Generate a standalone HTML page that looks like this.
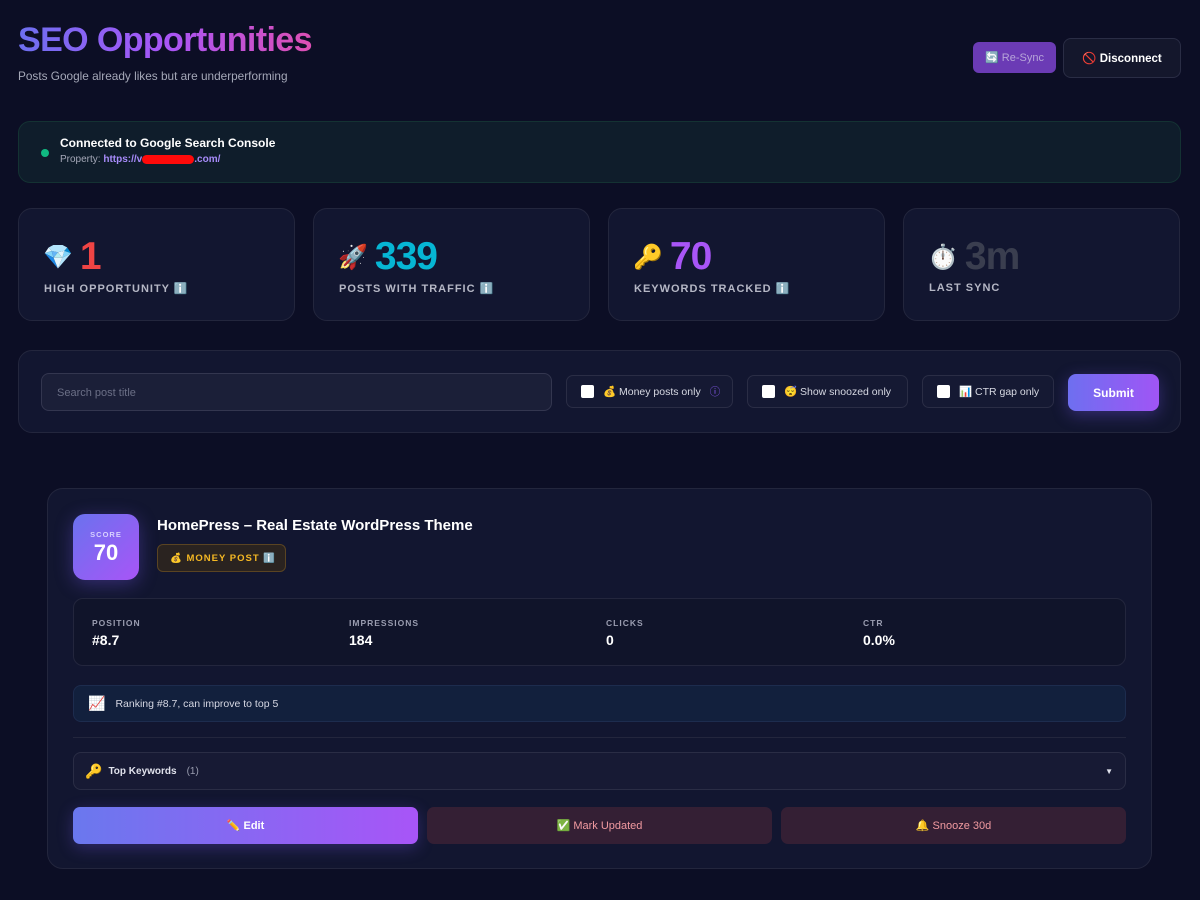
<!DOCTYPE html>
<html><head><meta charset="utf-8"><style>
*{box-sizing:border-box;margin:0;padding:0}
body{width:1200px;height:900px;overflow:hidden;background:#0c0e25;font-family:"Liberation Sans","Noto Sans CJK JP",sans-serif;color:#fff;position:relative}
.abs{position:absolute}
h1{position:absolute;left:18px;top:21px;font-size:34px;font-weight:700;letter-spacing:-0.6px;background:linear-gradient(90deg,#6d6ff0,#a855f7 50%,#dc4fb3);-webkit-background-clip:text;color:transparent}
.sub{left:18px;top:69px;font-size:11.8px;color:#a5a8b8}
.btn1{left:973px;top:42px;width:83px;height:31px;border-radius:6px;background:#6b3bb5;color:#b7a5d9;font-size:11px;display:flex;align-items:center;justify-content:center}
.btn2{left:1063px;top:38px;width:118px;height:40px;border-radius:8px;background:#14172c;border:1px solid #2a2d45;font-size:11.5px;font-weight:700;display:flex;align-items:center;justify-content:center}
.conn{left:18px;top:121px;width:1163px;height:62px;border-radius:12px;background:#0f1d2b;border:1px solid #143233}
.dot{left:22px;top:27px;width:8px;height:8px;border-radius:50%;background:#10b981}
.card{border-radius:14px;background:#121630;border:1px solid #23263d;width:277px;height:113px;top:208px}
.card .n{position:absolute;left:24px;top:26px;font-size:39px;font-weight:700;letter-spacing:-1px;display:flex;align-items:center;gap:8px}
.card .n span.e{font-size:24px}
.card .l{position:absolute;left:25px;top:73px;font-size:11px;letter-spacing:1px;color:#b5b7c5;font-weight:700}
.filt{left:18px;top:350px;width:1163px;height:83px;border-radius:14px;background:#121630;border:1px solid #23263d}
.search{left:22px;top:22px;width:511px;height:38px;border-radius:8px;background:#1b1f38;border:1px solid #33364f;font-size:11px;color:#6b6f86;padding:13px 15px}
.chk{top:24px;height:33px;border-radius:7px;background:#151933;border:1px solid #2a2d45;font-size:10.5px;color:#d6d8e2;display:flex;align-items:center;padding-left:14px;gap:9px}
.chk i{display:inline-block;width:13px;height:13px;background:#fff;border-radius:2px}
.submit{left:1049px;top:23px;width:91px;height:37px;border-radius:8px;background:linear-gradient(90deg,#6e6ff0,#a055f5);font-size:12px;font-weight:700;display:flex;align-items:center;justify-content:center;box-shadow:0 4px 16px rgba(120,90,240,.35)}
.post{left:47px;top:488px;width:1105px;height:381px;border-radius:16px;background:#121630;border:1px solid #23263d}
.score{left:25px;top:25px;width:66px;height:66px;border-radius:12px;background:linear-gradient(135deg,#6a72ee,#a855f7);text-align:center;box-shadow:0 4px 18px rgba(120,90,240,.35)}
.score .s{font-size:7.5px;letter-spacing:1px;color:#d8d0ff;margin-top:16px;font-weight:700}
.score .v{font-size:22px;font-weight:700;margin-top:1px}
.title{left:109px;top:28px;font-size:15px;font-weight:700}
.money{left:109px;top:55px;width:129px;height:28px;border-radius:6px;background:#2a2320;border:1px solid #5a4422;color:#f5b823;font-size:9.5px;font-weight:700;letter-spacing:1px;display:flex;align-items:center;padding-left:12px;gap:5px}
.stats{left:25px;top:109px;width:1053px;height:68px;border-radius:10px;background:#10142a;border:1px solid #23263d}
.st{position:absolute;top:19px}
.st .k{font-size:8.5px;letter-spacing:1px;color:#9a9db0;font-weight:700}
.st .v{font-size:14px;font-weight:700;margin-top:4px}
.rank{left:25px;top:196px;width:1053px;height:37px;border-radius:8px;background:#12203d;border:1px solid #1d2c4e;font-size:10.5px;color:#d5d7e3;display:flex;align-items:center;padding-left:14px;gap:10px}
.hr{left:25px;top:248px;width:1053px;height:1px;background:#23263d}
.kw{left:25px;top:263px;width:1053px;height:38px;border-radius:8px;background:#171a34;border:1px solid #2a2d45;font-size:10px;color:#e0e2ec;font-weight:700;display:flex;align-items:center;padding-left:11px;gap:6px}
.ab{top:318px;height:37px;width:345px;border-radius:7px;font-size:11px;display:flex;align-items:center;justify-content:center}
</style></head><body>
<h1>SEO Opportunities</h1>
<div class="abs sub">Posts Google already likes but are underperforming</div>
<div class="abs btn1">🔄 Re-Sync</div>
<div class="abs btn2">🚫 Disconnect</div>
<div class="abs conn"><div class="abs dot"></div>
<div class="abs" style="left:41px;top:14px;font-size:12px;font-weight:700">Connected to Google Search Console</div>
<div class="abs" style="left:41px;top:32px;font-size:10px;color:#a5a8b8">Property: <span style="color:#a78bfa;font-weight:700">https://v<span style="display:inline-block;width:52px;height:9px;background:#ff0a0a;border-radius:5px;vertical-align:middle"></span>.com/</span></div></div>
<div class="abs card" style="left:18px"><div class="n"><span class="e">💎</span><span style="color:#ef4444">1</span></div><div class="l">HIGH OPPORTUNITY ℹ️</div></div>
<div class="abs card" style="left:313px"><div class="n"><span class="e">🚀</span><span style="color:#06b6d4">339</span></div><div class="l">POSTS WITH TRAFFIC ℹ️</div></div>
<div class="abs card" style="left:608px"><div class="n"><span class="e">🔑</span><span style="color:#a855f7">70</span></div><div class="l">KEYWORDS TRACKED ℹ️</div></div>
<div class="abs card" style="left:903px"><div class="n"><span class="e">⏱️</span><span style="color:#3a3e4f">3m</span></div><div class="l">LAST SYNC</div></div>
<div class="abs filt">
<div class="abs search">Search post title</div>
<div class="abs chk" style="left:547px;width:167px"><i></i>💰 Money posts only <span style="color:#8b5cf6">ⓘ</span></div>
<div class="abs chk" style="left:728px;width:161px"><i></i>😴 Show snoozed only</div>
<div class="abs chk" style="left:903px;width:132px"><i></i>📊 CTR gap only</div>
<div class="abs submit">Submit</div>
</div>
<div class="abs post">
<div class="abs score"><div class="s">SCORE</div><div class="v">70</div></div>
<div class="abs title">HomePress – Real Estate WordPress Theme</div>
<div class="abs money">💰 MONEY POST ℹ️</div>
<div class="abs stats">
<div class="st" style="left:18px"><div class="k">POSITION</div><div class="v">#8.7</div></div>
<div class="st" style="left:275px"><div class="k">IMPRESSIONS</div><div class="v">184</div></div>
<div class="st" style="left:532px"><div class="k">CLICKS</div><div class="v">0</div></div>
<div class="st" style="left:789px"><div class="k">CTR</div><div class="v">0.0%</div></div>
</div>
<div class="abs rank"><span style="font-size:14px">📈</span> <span>Ranking #8.7, can improve to top 5</span></div>
<div class="abs hr"></div>
<div class="abs kw"><span style="font-size:14px">🔑</span> Top Keywords <span style="color:#9a9db0;font-weight:400;margin-left:4px">(1)</span><span style="position:absolute;right:12px;font-size:8px">▼</span></div>
<div class="abs ab" style="left:25px;background:linear-gradient(90deg,#6a78ee,#a855f7);font-weight:700;box-shadow:0 4px 16px rgba(120,90,240,.3)">✏️ Edit</div>
<div class="abs ab" style="left:379px;background:#341f34;color:#f19aa0">✅ Mark Updated</div>
<div class="abs ab" style="left:733px;background:#341f34;color:#f19aa0">🔔 Snooze 30d</div>
</div>
</body></html>
